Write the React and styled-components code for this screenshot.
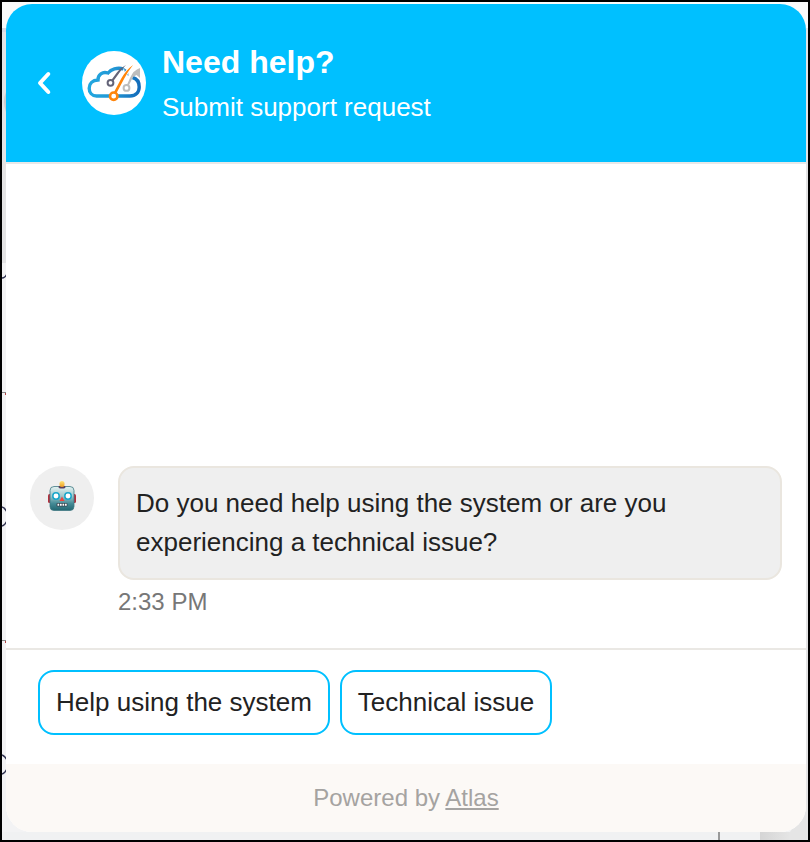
import React from "react";
import styled, { createGlobalStyle } from "styled-components";

const GlobalStyle = createGlobalStyle`
  * { box-sizing: border-box; }
  body { margin: 0; overflow: hidden; }
`;

const Frame = styled.main`
  position: relative;
  width: 810px;
  height: 842px;
  border: 2px solid #000;
  padding: 2px 2px 8px 4px;
  overflow: hidden;
  background: #f3f3f4;
  font-family: "Liberation Sans", Arial, sans-serif;
  color: #222;
`;

const Backdrop = styled.svg`
  position: absolute;
  inset: 0;
`;

const Widget = styled.section`
  position: relative;
  display: flex;
  flex-direction: column;
  width: 800px;
  height: 828px;
  border-radius: 26px;
  overflow: hidden;
  background: #fff;
`;

const Header = styled.header`
  display: flex;
  align-items: center;
  height: 160px;
  padding-left: 28px;
  background: #00c0ff;
  border-bottom: 2px solid #e8e8e8;
  color: #fff;
`;

const BackButton = styled.button`
  width: 20px;
  height: 28px;
  margin-right: 28px;
  padding: 0;
  border: 0;
  background: none;
  svg { display: block; }
`;

const Avatar = styled.div`
  display: grid;
  place-items: center;
  flex: none;
  width: 64px;
  height: 64px;
  border-radius: 50%;
  background: ${(p) => p.$fill};
`;

const Heading = styled.div`
  margin-left: 16px;
  white-space: nowrap;
`;

const Title = styled.h1`
  margin: 0;
  padding-top: 1px;
  font-size: 32px;
  line-height: 44px;
  font-weight: 700;
`;

const Subtitle = styled.p`
  margin: 0;
  padding-top: 2px;
  font-size: 26px;
  line-height: 42px;
`;

const Conversation = styled.div`
  display: flex;
  align-items: flex-end;
  flex: 1;
  padding: 0 24px 32px;
`;

const Message = styled.div`
  display: flex;
  align-items: flex-start;
  gap: 24px;
`;

const MessageBody = styled.div`
  width: 664px;
`;

const Bubble = styled.p`
  height: 114px;
  margin: 0;
  padding: 16px;
  border: 2px solid #eae6df;
  border-radius: 16px;
  background: #efefef;
  font-size: 26px;
  line-height: 39px;
  white-space: nowrap;
`;

const Time = styled.time`
  display: block;
  height: 36px;
  padding-top: 4px;
  font-size: 24px;
  line-height: 36px;
  color: #777;
`;

const Replies = styled.div`
  display: flex;
  gap: 10px;
  height: 116px;
  padding: 20px 32px;
  border-top: 2px solid #eae8e4;
`;

const Reply = styled.button`
  width: ${(p) => p.$width};
  height: 65px;
  padding: 0;
  border: 2px solid #00c0ff;
  border-radius: 16px;
  background: #fff;
  color: #222;
  font: 26px/39px "Liberation Sans", Arial, sans-serif;
  white-space: nowrap;
`;

const Footer = styled.footer`
  height: 68px;
  background: #fcf9f6;
  color: #a5a3a1;
  font-size: 24px;
  line-height: 68px;
  text-align: center;
`;

const AtlasLink = styled.a`
  text-decoration: underline;
  text-decoration-thickness: 2px;
  text-underline-offset: 2px;
`;

const PageEdges = () => (
  <Backdrop width="806" height="838" viewBox="2 2 806 838" fill="none">
    <defs>
      <linearGradient id="corner" x1="760" x2="790" y1="0" y2="0" gradientUnits="userSpaceOnUse">
        <stop stopColor="#d5d5d5" /><stop offset="1" stopColor="#e5e5e5" />
      </linearGradient>
    </defs>
    <path d="M2 2h806v27H2z" fill="#fafafa" />
    <path d="M2 28h5v235H2z" fill="#e3e3e4" />
    <path d="M806 28h2v812h-2z" fill="#e3e3e4" />
    <path d="M2 28h5v4H2z" fill="#d8d8e2" />
    <path d="M6 92q-4 9 0 20" fill="#cbcbcc" />
    <path d="M2 832h758v8H2z" fill="#f0f1f2" />
    <path d="M760 832h30l18-30v38h-48z" fill="url(#corner)" />
    <path d="M719 832v8" stroke="#999" strokeWidth="2" />
    <path d="M2 278q3 0 5-4M2 507q3 1 5 5M2 526q3-1 5-5M2 755q3 1 5 5M2 774q3-1 5-5" stroke="#303250" strokeWidth="1.5" />
    <path d="M2 392.5h4M2 640.5h4" stroke="#888" />
    <path d="M5 393h1v2H5zM5 641h1v2H5z" fill="#b34444" />
  </Backdrop>
);

const CloudLogo = () => (
  <svg width="64" height="64" viewBox="0 0 64 64" fill="none">
    <defs>
      <linearGradient id="cloud" x1="6" x2="59" y1="32" y2="35" gradientUnits="userSpaceOnUse">
        <stop stopColor="#22a8e0" /><stop offset=".5" stopColor="#2296d4" /><stop offset="1" stopColor="#1269b8" />
      </linearGradient>
    </defs>
    <path d="M28 45H14.500C10 45 7.200 41.500 7.200 37.200C7.200 32.500 10.500 29.300 16 29C15.800 23.500 20.500 20.300 26 22C29 18.500 35 16 41.500 18M50.500 26.500C54.500 27.500 57.200 31 57.200 36C57.200 41.500 53.500 45 48 45H36" stroke="url(#cloud)" strokeWidth="3.400" />
    <path d="M42 17L46 20L46.500 25L43 22Z" fill="#2089ca" />
    <path d="M29 29.500L34.500 22Q38 17 44 14Q39.500 18 36.500 23L31 30.500Z" fill="#646478" />
    <circle cx="28.500" cy="31.800" r="2.900" fill="#fff" stroke="#646478" strokeWidth="2" />
    <path d="M44.700 34.500L48 27Q51.500 19 58 17V27L54.500 24L51 26L46.500 35Z" fill="#bdbdbd" />
    <circle cx="44.500" cy="36.900" r="2.900" fill="#fff" stroke="#bdbdbd" strokeWidth="2" />
    <path d="M31.500 42L39 28Q44 19 51 14Q45.500 21 42 28L34 43Z" fill="#ff850b" stroke="#fff" strokeWidth="1.600" paintOrder="stroke" />
    <circle cx="31.700" cy="45.200" r="3.700" fill="#fff" stroke="#ff850b" strokeWidth="2.600" />
  </svg>
);

const Robot = () => (
  <svg width="64" height="64" viewBox="0 0 64 64">
    <defs>
      <linearGradient id="face" x1="0" x2="0" y1="20" y2="45" gradientUnits="userSpaceOnUse">
        <stop stopColor="#e8f5f4" /><stop offset=".4" stopColor="#9fc7cb" /><stop offset=".7" stopColor="#448b96" /><stop offset="1" stopColor="#20636e" />
      </linearGradient>
      <linearGradient id="lamp" x1="0" x2="0" y1="15" y2="21" gradientUnits="userSpaceOnUse">
        <stop stopColor="#ffe579" /><stop offset="1" stopColor="#ed9c20" />
      </linearGradient>
    </defs>
    <rect x="18" y="28" width="28" height="9" rx="1.500" fill="#b42f3c" />
    <rect x="20" y="20.500" width="24" height="24" rx="4" fill="url(#face)" stroke="#407983" strokeWidth=".8" />
    <ellipse cx="32" cy="21" rx="3.500" ry="1.500" fill="#594061" />
    <rect x="29.500" y="15" width="5" height="6" rx="2.500" fill="url(#lamp)" />
    <circle cx="26" cy="30" r="3.200" fill="#fff" stroke="#18a6ca" strokeWidth="1.500" />
    <circle cx="38" cy="30" r="3.200" fill="#fff" stroke="#18a6ca" strokeWidth="1.500" />
    <path d="M32 30.500L34.500 35H29.500Z" fill="#f0453c" />
    <rect x="26.500" y="37" width="11" height="3.500" rx="1" fill="#364650" />
    <path d="M27.500 38.700h9.500" stroke="#fff" strokeWidth="2" strokeDasharray="1.700 .8" />
  </svg>
);

export default function App() {
  return (
    <Frame>
      <GlobalStyle />
      <PageEdges />
      <Widget>
        <Header>
          <BackButton aria-label="Back">
            <svg width="20" height="28" viewBox="0 0 20 28" fill="none">
              <path d="M14.300 5L6 14L14.300 23" stroke="#fff" strokeWidth="4" strokeLinecap="round" strokeLinejoin="round" />
            </svg>
          </BackButton>
          <Avatar $fill="#fff"><CloudLogo /></Avatar>
          <Heading>
            <Title>Need help?</Title>
            <Subtitle>Submit support request</Subtitle>
          </Heading>
        </Header>
        <Conversation>
          <Message>
            <Avatar $fill="#efefef"><Robot /></Avatar>
            <MessageBody>
              <Bubble>Do you need help using the system or are you<br />experiencing a technical issue?</Bubble>
              <Time>2:33 PM</Time>
            </MessageBody>
          </Message>
        </Conversation>
        <Replies>
          <Reply $width="292px">Help using the system</Reply>
          <Reply $width="212px">Technical issue</Reply>
        </Replies>
        <Footer>Powered by <AtlasLink>Atlas</AtlasLink></Footer>
      </Widget>
    </Frame>
  );
}
